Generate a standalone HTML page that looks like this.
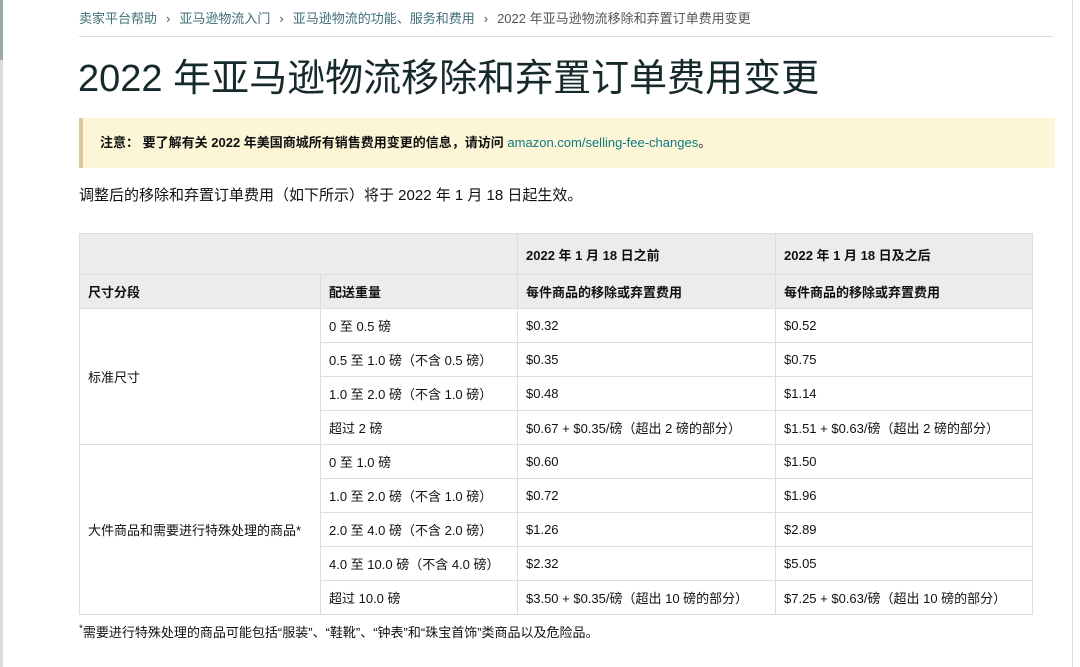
<!DOCTYPE html>
<html><head><meta charset="utf-8"><style>
html,body{margin:0;padding:0;background:#fff;width:1080px;height:667px;overflow:hidden}
body{font-family:"Liberation Sans","Noto Sans CJK SC",sans-serif;color:#0f1111;position:relative}
.lbar{position:absolute;left:0;top:0;width:3px;height:667px;background:#ddd}
.lbar2{position:absolute;left:0;top:0;width:3px;height:60px;background:#9aa}
.rbar{position:absolute;left:1072px;top:0;width:1px;height:667px;background:#ddd}
.bc{position:absolute;left:79px;top:8px;font-size:13px;color:#3f6e75;white-space:nowrap}
.bc .s{color:#555;margin:0 9px}
.bc .cur{color:#555}
.hr{position:absolute;left:79px;top:36px;width:974px;height:1px;background:#ddd}
h1{position:absolute;left:78px;top:51px;margin:0;font-size:38px;font-weight:400;color:#16292b;white-space:nowrap;line-height:56px}
.note{position:absolute;left:79px;top:118px;width:976px;height:50px;background:#fdf6d6;border-left:4px solid #d8c89a;box-sizing:border-box;font-size:13px;line-height:50px;padding-left:17px;white-space:nowrap}
.note b{font-weight:700}
.note a{color:#0e7a85;text-decoration:none;font-weight:400}
.p{position:absolute;left:79px;top:184px;font-size:15px;white-space:nowrap}
table{position:absolute;left:79px;top:233px;border-collapse:collapse;font-size:13px}
td{border:1px solid #ddd;padding:0 0 0 8px;height:33px;white-space:nowrap}
.h td{background:#ececec;font-weight:700}
.foot{position:absolute;left:79px;top:622px;font-size:13px;white-space:nowrap}
.foot sup{font-size:10px}
</style></head><body>
<div class="lbar"></div><div class="lbar2"></div><div class="rbar"></div>
<div class="bc">卖家平台帮助<span class="s">›</span>亚马逊物流入门<span class="s">›</span>亚马逊物流的功能、服务和费用<span class="s">›</span><span class="cur">2022 年亚马逊物流移除和弃置订单费用变更</span></div>
<div class="hr"></div>
<h1>2022 年亚马逊物流移除和弃置订单费用变更</h1>
<div class="note"><b>注意：</b> <b>要了解有关 2022 年美国商城所有销售费用变更的信息，请访问</b> <a>amazon.com/selling-fee-changes</a>。</div>
<div class="p">调整后的移除和弃置订单费用（如下所示）将于 2022 年 1 月 18 日起生效。</div>
<table>
<colgroup><col style="width:241px"><col style="width:197px"><col style="width:258px"><col style="width:257px"></colgroup>
<tr class="h"><td colspan="2" style="height:40px"></td><td style="height:40px">2022 年 1 月 18 日之前</td><td style="height:40px">2022 年 1 月 18 日及之后</td></tr>
<tr class="h"><td>尺寸分段</td><td>配送重量</td><td>每件商品的移除或弃置费用</td><td>每件商品的移除或弃置费用</td></tr>
<tr><td rowspan="4">标准尺寸</td><td>0 至 0.5 磅</td><td>$0.32</td><td>$0.52</td></tr>
<tr><td>0.5 至 1.0 磅（不含 0.5 磅）</td><td>$0.35</td><td>$0.75</td></tr>
<tr><td>1.0 至 2.0 磅（不含 1.0 磅）</td><td>$0.48</td><td>$1.14</td></tr>
<tr><td>超过 2 磅</td><td>$0.67 + $0.35/磅（超出 2 磅的部分）</td><td>$1.51 + $0.63/磅（超出 2 磅的部分）</td></tr>
<tr><td rowspan="5">大件商品和需要进行特殊处理的商品*</td><td>0 至 1.0 磅</td><td>$0.60</td><td>$1.50</td></tr>
<tr><td>1.0 至 2.0 磅（不含 1.0 磅）</td><td>$0.72</td><td>$1.96</td></tr>
<tr><td>2.0 至 4.0 磅（不含 2.0 磅）</td><td>$1.26</td><td>$2.89</td></tr>
<tr><td>4.0 至 10.0 磅（不含 4.0 磅）</td><td>$2.32</td><td>$5.05</td></tr>
<tr><td>超过 10.0 磅</td><td>$3.50 + $0.35/磅（超出 10 磅的部分）</td><td>$7.25 + $0.63/磅（超出 10 磅的部分）</td></tr>
</table>
<div class="foot"><sup>*</sup>需要进行特殊处理的商品可能包括“服装”、“鞋靴”、“钟表”和“珠宝首饰”类商品以及危险品。</div>
</body></html>
